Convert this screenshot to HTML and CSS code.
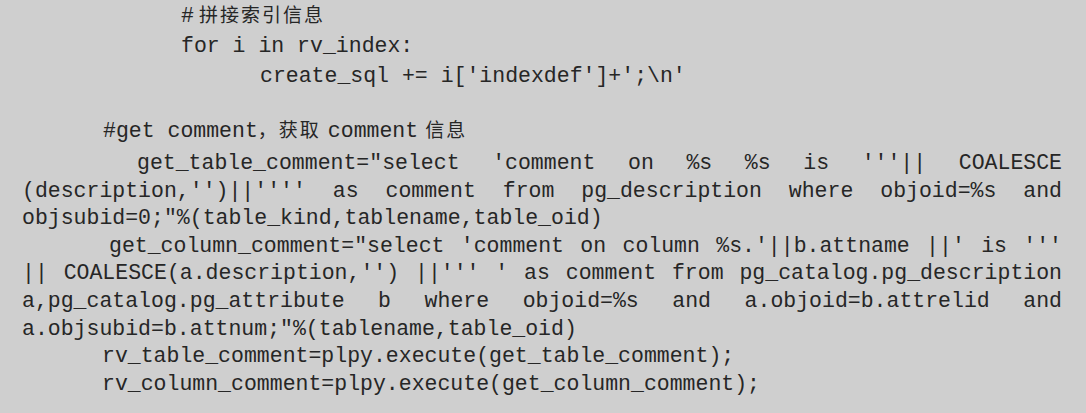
FILE: index.html
```html
<!DOCTYPE html>
<html lang="zh">
<head>
<meta charset="utf-8">
<title>code</title>
<link rel="stylesheet" href="styles.css">
</head>
<body>
<div class="page">
  <div class="block-top">
    <div class="ln tall ind-for">#<span class="cjk lead">拼接索引信息</span></div>
    <div class="ln tall ind-for">for i in rv_index:</div>
    <div class="ln tall ind-create">create_sql += i['indexdef']+';\n'</div>
  </div>
  <div class="block-main">
    <div class="ln tall ind-get">#get comment<span class="cjk">，获取</span><span class="gapl">comment</span><span class="cjk gapl">信息</span></div>
    <div class="ln just ind-gtc">get_table_comment="select 'comment on %s %s is '''|| COALESCE</div>
    <div class="ln just">(description,'')||'''' as comment from pg_description where objoid=%s and</div>
    <div class="ln">objsubid=0;"%(table_kind,tablename,table_oid)</div>
    <div class="ln just ind-gcc">get_column_comment="select 'comment on column %s.'||b.attname ||' is '''</div>
    <div class="ln just">|| COALESCE(a.description,'') ||''' ' as comment from pg_catalog.pg_description</div>
    <div class="ln just">a,pg_catalog.pg_attribute b where objoid=%s and a.objoid=b.attrelid and</div>
    <div class="ln">a.objsubid=b.attnum;"%(tablename,table_oid)</div>
    <div class="ln ind-rv">rv_table_comment=plpy.execute(get_table_comment);</div>
    <div class="ln ind-rv">rv_column_comment=plpy.execute(get_column_comment);</div>
  </div>
</div>
</body>
</html>
```
FILE: styles.css
```css
html, body {
  margin: 0;
  padding: 0;
  background: #cfcfcf;
}

.page {
  width: 1086px;
  height: 413px;
  box-sizing: border-box;
  padding: 1px 24px 0 22px;
  background: #cfcfcf;
  color: #262626;
  font-family: "Liberation Mono", "Courier New", monospace;
  font-size: 21.5px;
  overflow: hidden;
}

.block-top {
  display: flex;
  flex-direction: column;
}

.block-main {
  display: flex;
  flex-direction: column;
  margin-top: 25px;
}

.ln {
  height: 27.6px;
  line-height: 27.6px;
  white-space: pre;
  overflow: visible;
}

.ln.tall {
  height: 30px;
  line-height: 30px;
}

.ln.just {
  white-space: normal;
  text-align: justify;
  text-align-last: justify;
}

.cjk {
  font-family: "Noto Sans CJK SC", sans-serif;
  font-size: 19px;
  letter-spacing: 2px;
  line-height: 1;
}

.cjk.lead {
  margin-left: 5px;
}

.gapl {
  margin-left: 7px;
}

.ind-for { padding-left: 159px; }
.ind-create { padding-left: 238px; }
.ind-get { padding-left: 81px; }
.ind-gtc { padding-left: 115px; margin-top: 4px; }
.ind-gcc { padding-left: 87px; }
.ind-rv { padding-left: 80px; }
```
